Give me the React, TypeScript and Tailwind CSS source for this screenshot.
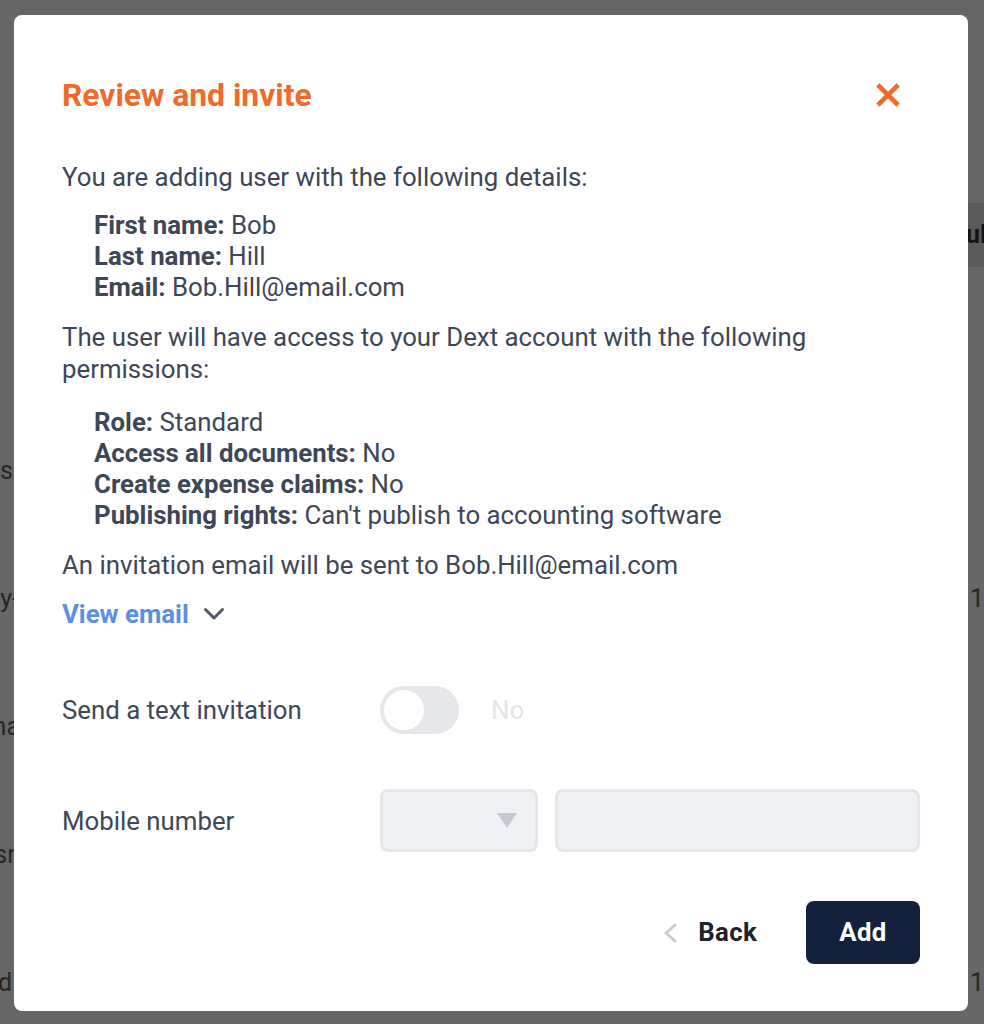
import React from "react";

const rows = [
  { left: "", lcls: "", right: "" },
  { left: "Photos", lcls: "mr-[1px]", right: "" },
  { left: "Grocery-", lcls: "-mr-[5px]", right: "10" },
  { left: "Mana", lcls: "-mr-[6px]", right: "" },
  { left: "Busn", lcls: "-mr-[7px]", right: "" },
  { left: "Fixed", lcls: "mr-[2px]", right: "17" },
];

function CloseIcon() {
  return (
    <svg width="24" height="24" viewBox="0 0 24 24" fill="none">
      <path d="M3.5 3.5 L20.5 20.5 M20.5 3.5 L3.5 20.5" stroke="#ef6a2b" strokeWidth="4.6" strokeLinecap="square" />
    </svg>
  );
}

export default function App() {
  return (
    <div className="relative w-[984px] h-[1024px] overflow-hidden bg-[#666666] font-['Roboto','Noto_Sans',sans-serif]">
      {/* background page (dimmed) */}
      <div className="flex flex-col pt-[203px]">
        <div className="ml-[400px] h-[64px] bg-[#5a5a5a] flex items-center justify-end">
          <div className="w-[18px] overflow-hidden flex justify-start">
            <span className="whitespace-nowrap text-[25px] font-bold text-[#141414]">ul</span>
          </div>
        </div>
        <div className="mt-[12px] flex flex-col">
          {rows.map((r, i) => (
            <div key={i} className="h-[128px] flex items-center justify-between">
              <div className="w-[14px] overflow-hidden flex justify-end">
                <span className={"whitespace-nowrap text-[25px] text-[#262626] " + r.lcls}>{r.left}</span>
              </div>
              <div className="w-[16px] pl-[2px] overflow-hidden flex justify-start">
                <span className="whitespace-nowrap text-[25px] text-[#262626]">{r.right}</span>
              </div>
            </div>
          ))}
        </div>
      </div>

      {/* modal */}
      <div className="absolute left-[14px] top-[15px] w-[954px] h-[996px] rounded-[8px] bg-white px-[48px] pt-[62px] flex flex-col text-[25.8px] text-[#3d4757]">
        <div className="flex items-center justify-between h-[36px]">
          <h2 className="text-[31.8px] leading-[36px] font-bold text-[#ef6a2b]">Review and invite</h2>
          <button className="mr-[20px] flex items-center justify-center">
            <CloseIcon />
          </button>
        </div>

        <p className="mt-[46px] leading-[36px]">You are adding user with the following details:</p>
        <ul className="mt-[15px] pl-[32px] leading-[31px]">
          <li><span className="font-bold">First name:</span> Bob</li>
          <li><span className="font-bold">Last name:</span> Hill</li>
          <li><span className="font-bold">Email:</span> Bob.Hill@email.com</li>
        </ul>

        <p className="mt-[18px] leading-[32px]">
          The user will have access to your Dext account with the following permissions:
        </p>
        <ul className="mt-[22px] pl-[32px] leading-[31px]">
          <li><span className="font-bold">Role:</span> Standard</li>
          <li><span className="font-bold">Access all documents:</span> No</li>
          <li><span className="font-bold">Create expense claims:</span> No</li>
          <li><span className="font-bold">Publishing rights:</span> Can't publish to accounting software</li>
        </ul>

        <p className="mt-[16px] leading-[36px]">An invitation email will be sent to Bob.Hill@email.com</p>

        <button className="mt-[13px] self-start flex items-center gap-[14px] leading-[36px] font-bold text-[#5b8fe2]">
          View email
          <svg width="22" height="14" viewBox="0 0 22 14" fill="none">
            <path d="M2.5 2.5 L11 11 L19.5 2.5" stroke="#4f5968" strokeWidth="3" strokeLinecap="round" strokeLinejoin="round" />
          </svg>
        </button>

        <div className="mt-[54px] h-[48px] flex items-center">
          <div className="w-[318px] leading-[36px]">Send a text invitation</div>
          <div className="w-[79px] h-[48px] rounded-full bg-[#e5e7eb] p-[4px] flex items-center">
            <div className="w-[40px] h-[40px] rounded-full bg-white" />
          </div>
          <span className="ml-[32px] leading-[36px] text-[#e3e5e9]">No</span>
        </div>

        <div className="mt-[55px] h-[63px] flex items-center">
          <div className="w-[318px] leading-[36px]">Mobile number</div>
          <div className="w-[158px] h-[63px] rounded-[8px] border-[3px] border-[#e4e6eb] bg-[#f0f1f4] flex items-center justify-end pr-[18px]">
            <svg width="20" height="15" viewBox="0 0 20 15">
              <path d="M0 0 L20 0 L10 15 Z" fill="#c4c9d2" />
            </svg>
          </div>
          <div className="ml-[17px] flex-1 h-[63px] rounded-[8px] border-[3px] border-[#e4e6eb] bg-[#f0f1f4]" />
        </div>

        <div className="mt-[49px] flex items-center justify-end">
          <button className="flex items-center gap-[19px] text-[#1f2329] font-bold tracking-[0.3px]">
            <svg width="17" height="20" viewBox="0 0 17 20" fill="none">
              <path d="M13 2 L4 10 L13 18" stroke="#c7ccd4" strokeWidth="3" strokeLinecap="round" strokeLinejoin="round" />
            </svg>
            Back
          </button>
          <button className="ml-[49px] w-[114px] h-[63px] rounded-[8px] bg-[#13213c] text-white font-bold tracking-[0.3px]">
            Add
          </button>
        </div>
      </div>
    </div>
  );
}
